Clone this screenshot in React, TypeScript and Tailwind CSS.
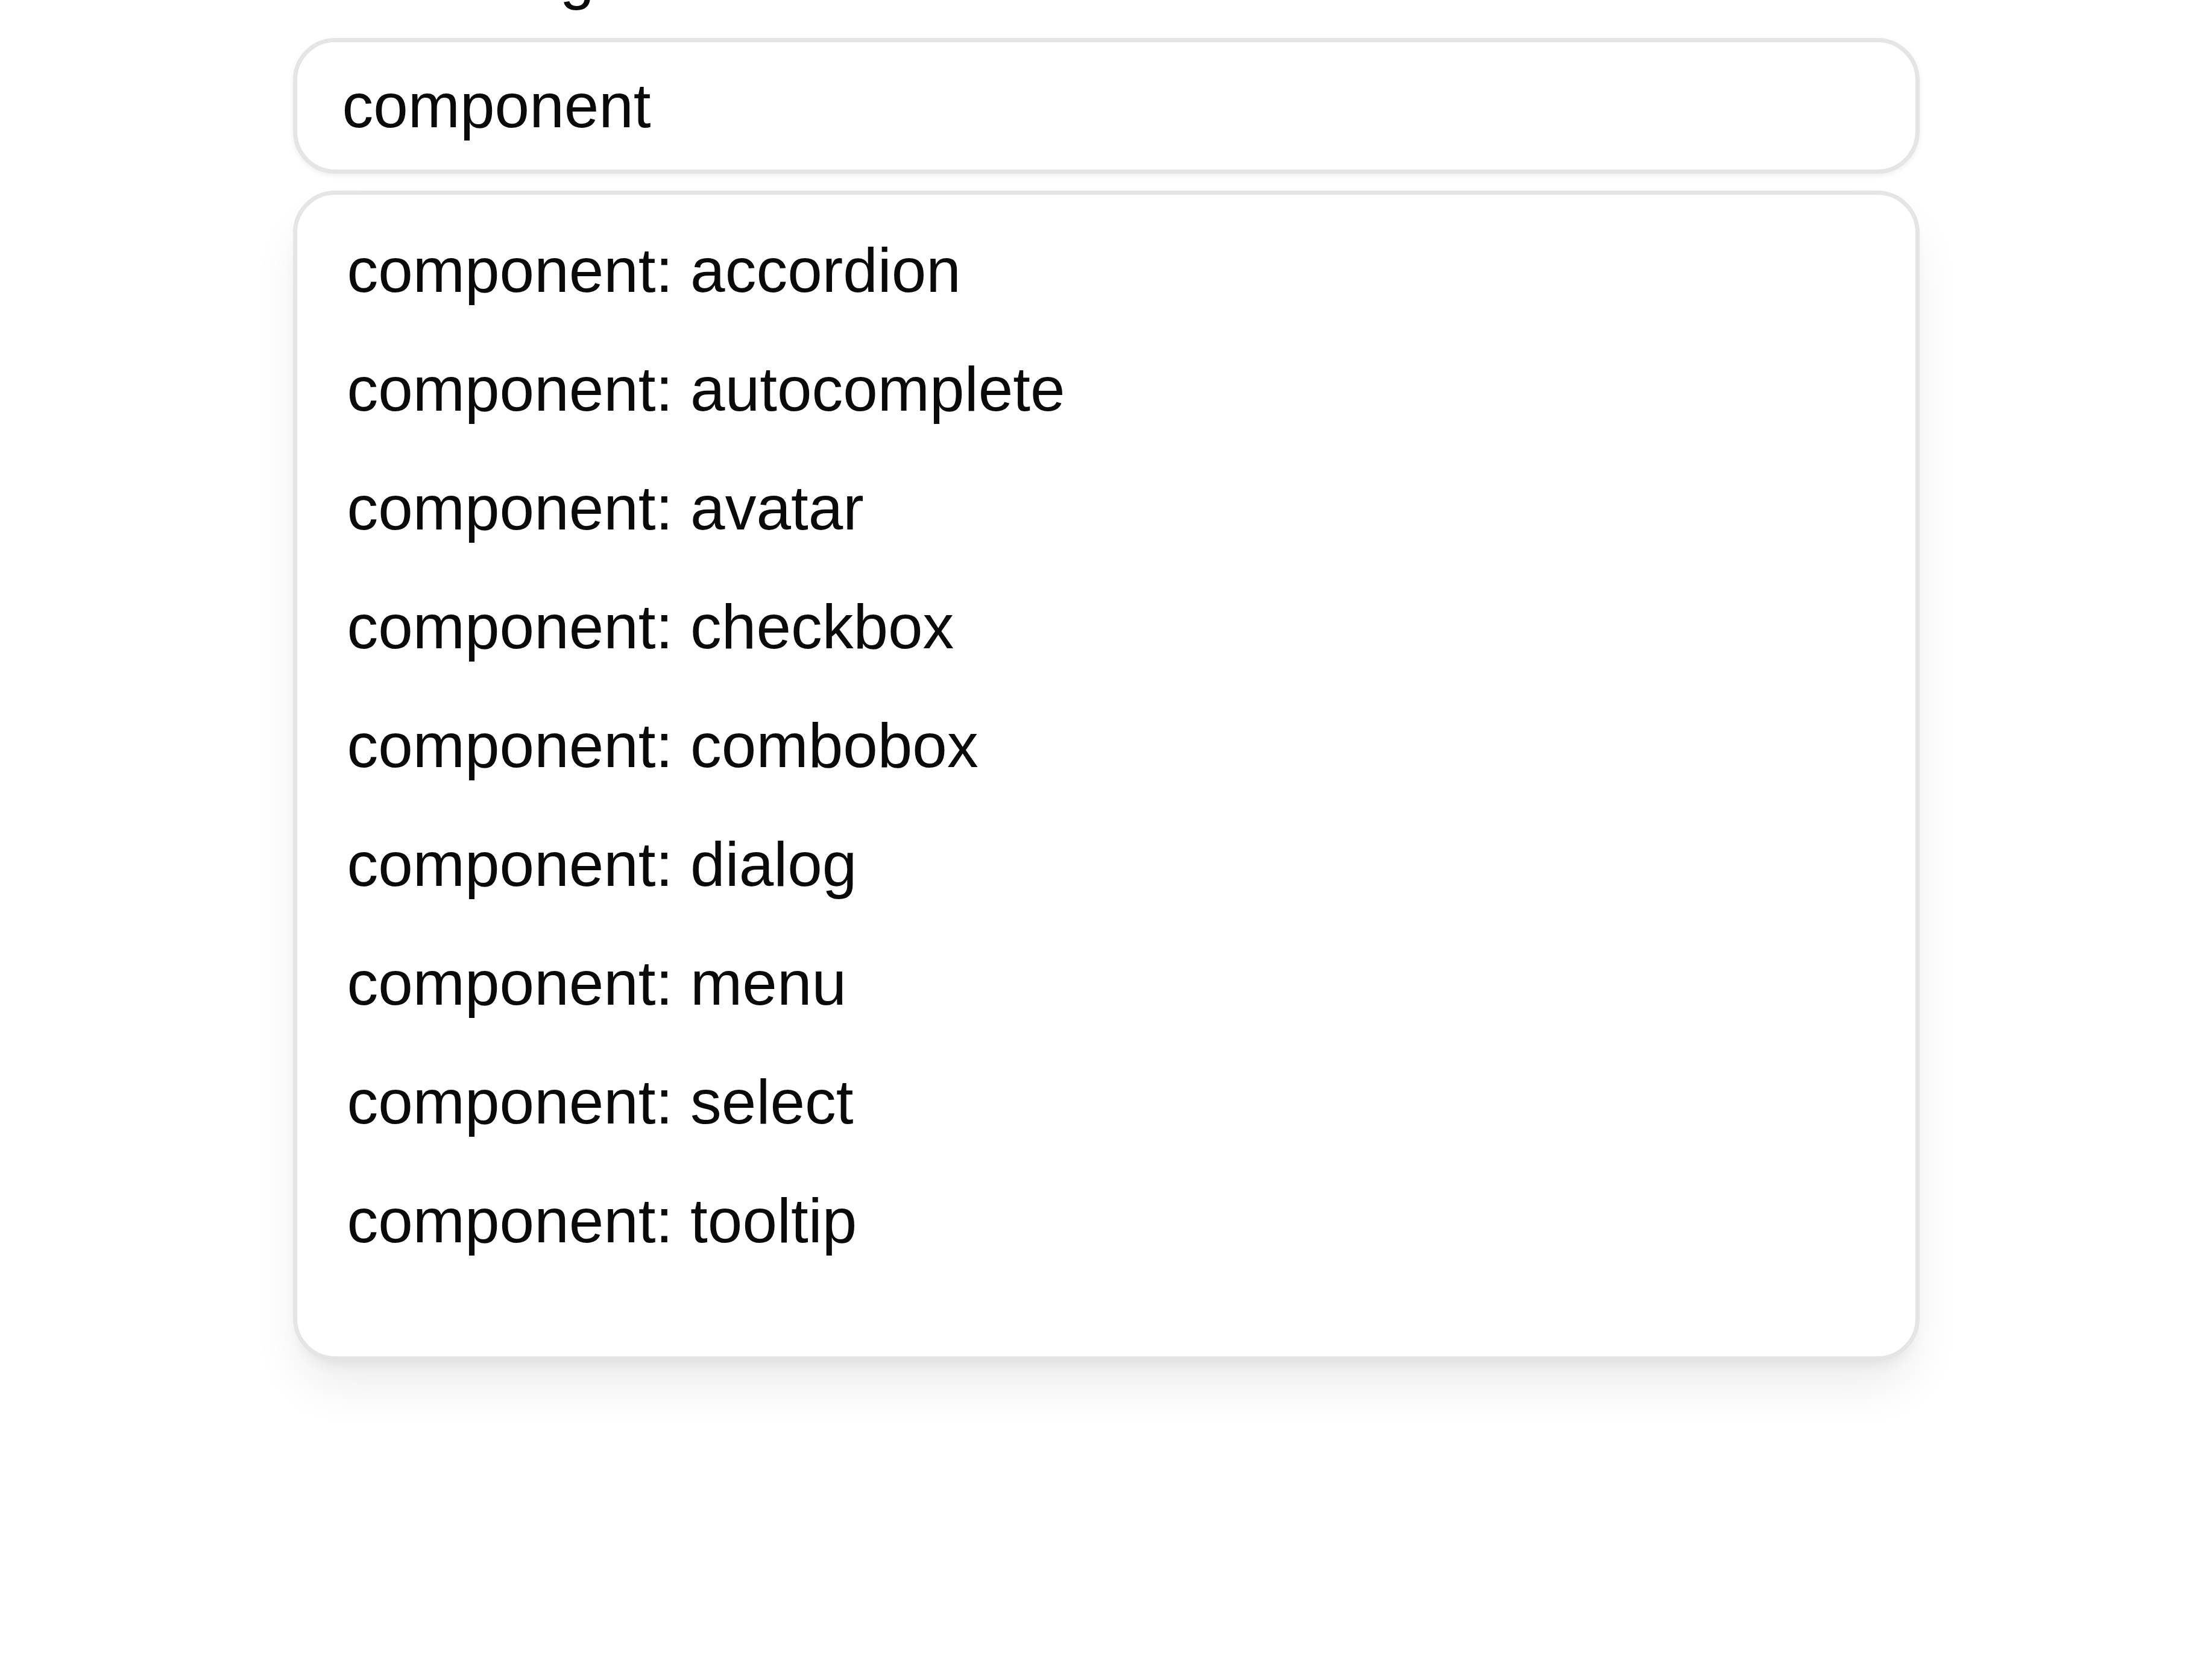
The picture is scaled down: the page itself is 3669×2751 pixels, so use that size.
import { useState } from 'react'

const suggestions = [
  'accordion',
  'autocomplete',
  'avatar',
  'checkbox',
  'combobox',
  'dialog',
  'menu',
  'select',
  'tooltip',
]

export default function App() {
  const [query, setQuery] = useState('component')

  return (
    <div className="min-h-[2751px] w-full bg-white font-['Liberation_Sans',Arial,sans-serif] text-[#0a0a0a] overflow-hidden">
      <div className="mx-auto w-[2698px] flex flex-col">
        <label className="mt-[-92px] mb-[51px] text-[103.5px] leading-none">
          Search tags
        </label>
        <input
          value={query}
          onChange={e => setQuery(e.target.value)}
          className="h-[225px] w-full rounded-[70px] border-[7px] border-[#e5e5e5] bg-white pl-[75px] pr-[75px] text-[103.5px] leading-[115px] text-[#0a0a0a] outline-none shadow-[0_3px_8px_rgba(0,0,0,0.07)]"
        />
        <ul className="mt-[28px] rounded-[70px] border-[7px] border-[#e5e5e5] bg-white pt-[27px] pb-[126px] shadow-[0_50px_80px_-10px_rgba(0,0,0,0.08),0_15px_25px_-12px_rgba(0,0,0,0.08)]">
          {suggestions.map(item => (
            <li
              key={item}
              className="flex h-[197px] items-center pl-[83px] text-[103.5px] leading-[115px]"
            >
              {`${query}: ${item}`}
            </li>
          ))}
        </ul>
      </div>
    </div>
  )
}
